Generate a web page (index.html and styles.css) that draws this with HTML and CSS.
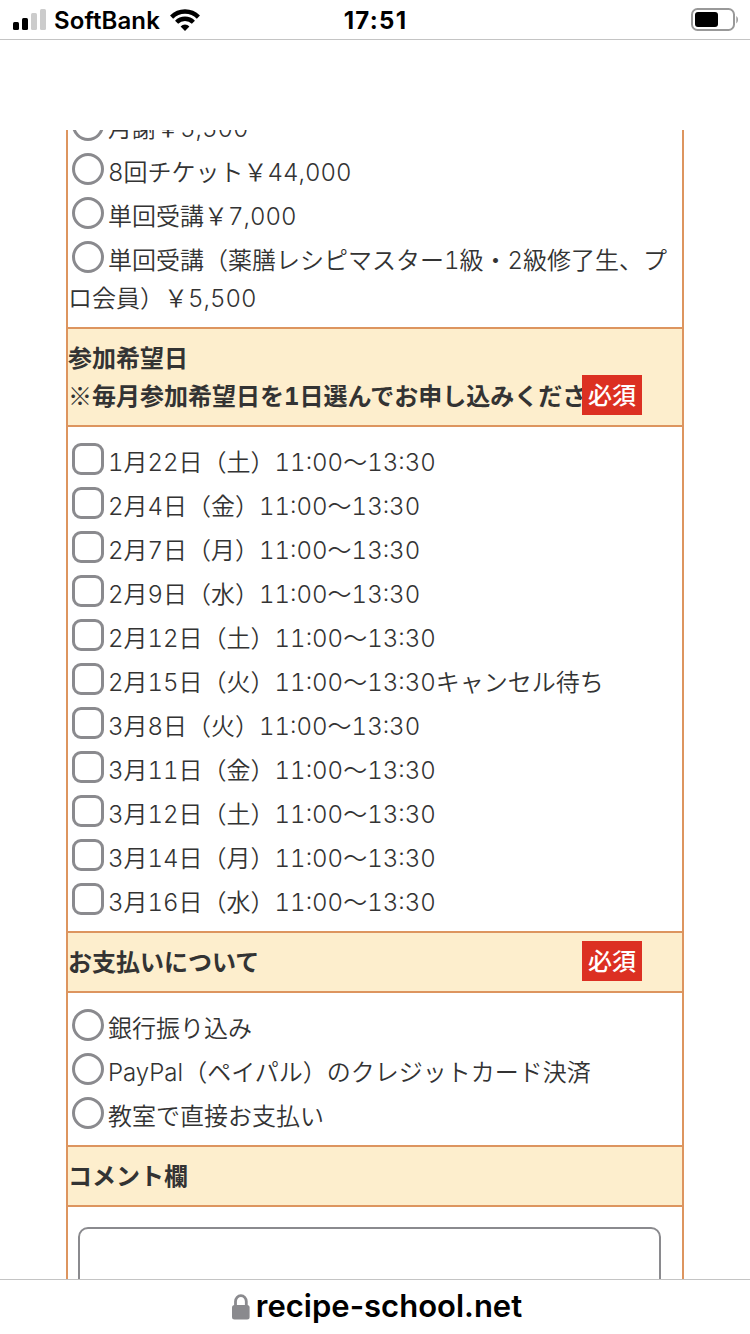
FILE: index.html
```html
<!DOCTYPE html>
<html lang="ja">
<head>
  <meta charset="UTF-8">
  <meta name="viewport" content="width=device-width, initial-scale=1.0">
  <title>お申し込みフォーム</title>
  <link rel="stylesheet" href="styles.css">
</head>
<body>

  <header class="status-bar">
    <div class="carrier">
      <svg class="signal" width="33" height="21" viewBox="0 0 33 21">
        <rect x="0" y="13" width="6" height="8" rx="1.5" fill="#000"/>
        <rect x="9" y="9" width="6" height="12" rx="1.5" fill="#000"/>
        <rect x="18" y="4" width="6" height="17" rx="1.5" fill="#ccc"/>
        <rect x="27" y="0" width="6" height="21" rx="1.5" fill="#ccc"/>
      </svg>
      <span class="carrier-name">SoftBank</span>
      <svg class="wifi" width="30" height="22" viewBox="0 0 30 22">
        <g fill="none" stroke="#000" stroke-width="4.4">
          <path d="M1.6 8.1a19 19 0 0 1 26.8 0"/>
          <path d="M6.6 13.2a11.9 11.9 0 0 1 16.8 0"/>
        </g>
        <path d="M15 21.9l-4.4-4.5a6.3 6.3 0 0 1 8.8 0z" fill="#000"/>
      </svg>
    </div>
    <div class="clock">17:51</div>
    <svg class="battery" width="48" height="23" viewBox="0 0 48 23">
      <rect x="1" y="1" width="42" height="21" rx="5.5" fill="none" stroke="#999" stroke-width="2"/>
      <rect x="4" y="4" width="23" height="15" rx="3" fill="#000"/>
      <path d="M45.3 8v7.4c2.2-1.4 2.2-6 0-7.4z" fill="#999"/>
    </svg>
  </header>

  <main class="page">
    <form class="form">
      <ul class="options">
        <li><span class="radio"></span>月謝￥5,500</li>
        <li><span class="radio"></span>8回チケット￥44,000</li>
        <li><span class="radio"></span>単回受講￥7,000</li>
        <li><span class="radio"></span>単回受講（薬膳レシピマスター1級・2級修了生、プロ会員）￥5,500</li>
      </ul>

      <div class="heading">参加希望日<br><span class="mark">※</span>毎月参加希望日を1日選んでお申し込みください<span class="required">必須</span></div>
      <ul class="options">
        <li><span class="checkbox"></span>1月22日（土）11:00～13:30</li>
        <li><span class="checkbox"></span>2月4日（金）11:00～13:30</li>
        <li><span class="checkbox"></span>2月7日（月）11:00～13:30</li>
        <li><span class="checkbox"></span>2月9日（水）11:00～13:30</li>
        <li><span class="checkbox"></span>2月12日（土）11:00～13:30</li>
        <li><span class="checkbox"></span>2月15日（火）11:00～13:30キャンセル待ち</li>
        <li><span class="checkbox"></span>3月8日（火）11:00～13:30</li>
        <li><span class="checkbox"></span>3月11日（金）11:00～13:30</li>
        <li><span class="checkbox"></span>3月12日（土）11:00～13:30</li>
        <li><span class="checkbox"></span>3月14日（月）11:00～13:30</li>
        <li><span class="checkbox"></span>3月16日（水）11:00～13:30</li>
      </ul>

      <div class="heading">お支払いについて<span class="required">必須</span></div>
      <ul class="options">
        <li><span class="radio"></span>銀行振り込み</li>
        <li><span class="radio"></span>PayPal（ペイパル）のクレジットカード決済</li>
        <li><span class="radio"></span>教室で直接お支払い</li>
      </ul>

      <div class="heading">コメント欄</div>
      <div class="comment">
        <textarea class="comment-box"></textarea>
      </div>
    </form>
  </main>

  <footer class="address-bar">
    <svg class="lock" width="18" height="26" viewBox="0 0 18 26">
      <path d="M3.5 12V7.5a5.4 5.8 0 0 1 10.8 0V12" fill="none" stroke="#8a8a8e" stroke-width="2.8"/>
      <rect x="0" y="11" width="17.6" height="14.6" rx="2.5" fill="#8a8a8e"/>
    </svg>
    <span class="host">recipe-school.net</span>
  </footer>

</body>
</html>
```

FILE: styles.css
```css
* {
  box-sizing: border-box;
}
body {
  display: flex;
  flex-direction: column;
  height: 1334px;
  margin: 0;
  overflow: hidden;
  background: #fff;
  color: #333;
  font-family: Inter, 'Noto Sans CJK JP', sans-serif;
}

/* status bar */
.status-bar {
  display: grid;
  grid-template-columns: 1fr auto 1fr;
  align-items: center;
  flex: none;
  height: 40px;
  padding: 0 12px 0 13px;
  border-bottom: 1px solid #c4c4c4;
  color: #000;
}
.carrier {
  display: flex;
  align-items: center;
}
.carrier-name {
  margin: 2px 10px 0 8px;
  font-size: 24px;
  font-weight: 600;
  letter-spacing: 0.1px;
  line-height: 30px;
}
.clock {
  margin-top: 2px;
  font-size: 24px;
  font-weight: 700;
  letter-spacing: 1.3px;
  line-height: 30px;
}
.battery {
  justify-self: end;
  margin-right: -1px;
}

/* form */
.page {
  flex: 1;
  min-height: 0;
  margin: 90px 66px 0;
  overflow: hidden;
}
.form {
  height: 1300px;
  margin-top: -37px;
  border: solid #dd955f;
  border-width: 0 2px;
  font-size: 24px;
  font-variant-numeric: tabular-nums;
  line-height: 38px;
}
.options {
  margin: 0;
  padding: 11px 0 9px;
  list-style: none;
  font-weight: 350;
}
.options li {
  padding-top: 6px;
}
.radio,
.checkbox {
  display: inline-block;
  width: 32px;
  height: 32px;
  margin: -1px 4px 0;
  border: 3px solid #8a8a8e;
  border-radius: 50%;
  vertical-align: top;
}
.checkbox {
  border-radius: 9px;
}
.heading {
  position: relative;
  padding: 11px 0 9px;
  border: solid #dd955f;
  border-width: 2px 0;
  background: #fdeecd;
  font-weight: 700;
  white-space: nowrap;
}
.mark {
  font-family: 'Noto Sans CJK JP', sans-serif;
  font-weight: 400;
  line-height: 1;
}
.required {
  position: absolute;
  right: 40px;
  bottom: 10px;
  width: 60px;
  height: 40px;
  background: #dc3022;
  color: #fff;
  font-weight: 500;
  line-height: 42px;
  text-align: center;
}
.comment {
  padding: 20px 21px 0 10px;
}
.comment-box {
  display: block;
  width: 100%;
  height: 200px;
  border: 2px solid #8a8a8e;
  border-radius: 10px;
  resize: none;
}

/* address bar */
.address-bar {
  display: flex;
  justify-content: center;
  flex: none;
  height: 55px;
  padding: 8px 0 0 4px;
  border-top: 1px solid #c4c4c4;
  color: #000;
}
.lock {
  margin: 6px 6px 0 0;
}
.host {
  font-size: 31px;
  font-weight: 600;
  line-height: 36px;
}
```
